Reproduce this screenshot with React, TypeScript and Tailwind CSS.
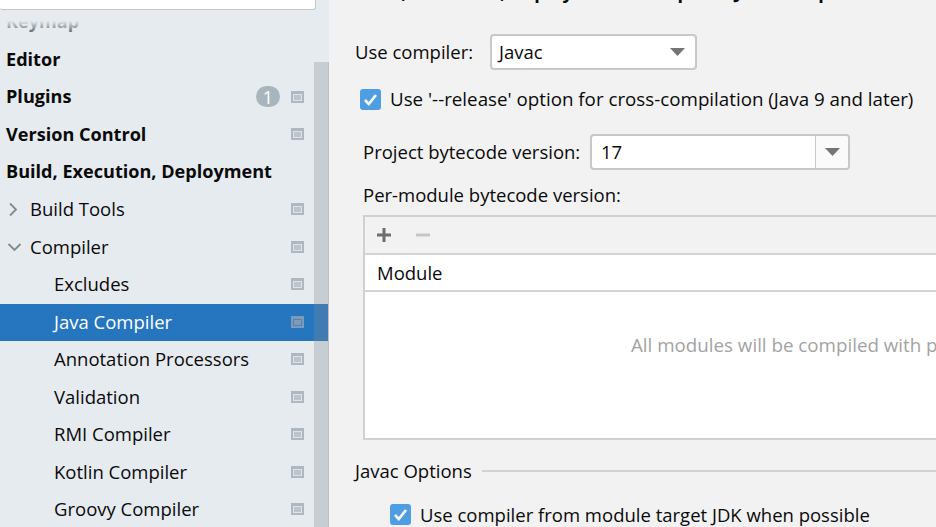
const font = "font-['Open_Sans','Noto_Sans',sans-serif]";

function ProjectIcon({ selected }: { selected?: boolean }) {
  return (
    <svg width="13" height="12" viewBox="0 0 13 12" className="shrink-0">
      <rect width="13" height="12" fill={selected ? "#7d9bb8" : "#aeb8c1"} />
      <rect x="2" y="3" width="9" height="7" fill={selected ? "#4f84b8" : "#dde3e8"} />
      <rect x="3" y="4" width="7" height="5" fill={selected ? "#7d9bb8" : "#bcc5cd"} />
    </svg>
  );
}

function TreeRow({
  label,
  bold,
  indent = 6,
  icon,
  badge,
  arrow,
  selected,
}: {
  label: string;
  bold?: boolean;
  indent?: number;
  icon?: boolean;
  badge?: string;
  arrow?: "right" | "down";
  selected?: boolean;
}) {
  return (
    <div
      className={`relative flex h-[37.5px] shrink-0 items-center pr-[25px] pb-[1px] ${
        selected ? "bg-[#2675bf] text-white" : "text-[#0a0a0a]"
      }`}
      style={{ paddingLeft: indent }}
    >
      {arrow === "right" && (
        <svg width="10" height="15" viewBox="0 0 10 15" fill="none" className="absolute left-2">
          <path d="M2 1.5l6 6-6 6" stroke="#85898d" strokeWidth="1.8" />
        </svg>
      )}
      {arrow === "down" && (
        <svg width="15" height="10" viewBox="0 0 15 10" fill="none" className="absolute left-[7px]">
          <path d="M1.5 2l6 6 6-6" stroke="#85898d" strokeWidth="1.8" />
        </svg>
      )}
      <span className={`flex-1 whitespace-nowrap ${bold ? "text-[18.1px] font-bold" : "text-[18.5px]"}`}>{label}</span>
      {badge && (
        <span className="mr-[11px] flex h-[21px] w-6 items-center justify-center rounded-full bg-[#a9b5bd] text-[18px] leading-none text-white">
          {badge}
        </span>
      )}
      {icon && <ProjectIcon selected={selected} />}
    </div>
  );
}

function Checkbox() {
  return (
    <span className="flex h-[21px] w-[21px] shrink-0 items-center justify-center rounded-[3px] bg-[#4f9ee3]">
      <svg width="15" height="13" viewBox="0 0 15 13" fill="none">
        <path d="M2 7l3.8 4L13 2" stroke="white" strokeWidth="2.6" />
      </svg>
    </span>
  );
}

function Arrow() {
  return (
    <svg width="15" height="8" viewBox="0 0 15 8">
      <path d="M0 0h15L7.5 8z" fill="#757575" />
    </svg>
  );
}

export default function App() {
  return (
    <div className={`flex h-[527px] w-[936px] overflow-hidden text-[18.5px] text-[#0a0a0a] ${font}`}>
      <aside className="relative flex w-[329px] shrink-0 flex-col overflow-hidden bg-[#e6ebf0]">
        <div className="relative z-10 mr-[13px] h-[10px] shrink-0 rounded-b-[3px] border-r border-b border-[#c4c7ca] bg-white" />
        <div className="relative -mt-[6.5px]">
          <TreeRow label="Keymap" bold />
          <div className="absolute inset-x-0 top-0 h-[37.5px] bg-gradient-to-b from-[#e6ebf0] from-45% to-transparent" />
        </div>
        <TreeRow label="Editor" bold />
        <TreeRow label="Plugins" bold icon badge="1" />
        <TreeRow label="Version Control" bold icon />
        <TreeRow label="Build, Execution, Deployment" bold />
        <TreeRow label="Build Tools" indent={30} arrow="right" icon />
        <TreeRow label="Compiler" indent={30} arrow="down" icon />
        <TreeRow label="Excludes" indent={54} icon />
        <TreeRow label="Java Compiler" indent={54} icon selected />
        <TreeRow label="Annotation Processors" indent={54} icon />
        <TreeRow label="Validation" indent={54} icon />
        <TreeRow label="RMI Compiler" indent={54} icon />
        <TreeRow label="Kotlin Compiler" indent={54} icon />
        <TreeRow label="Groovy Compiler" indent={54} icon />
        {/* scrollbar thumb lies over the rows */}
        <div className="absolute top-[62px] right-0 bottom-0 w-[15px] border-r border-[#bcc0c5] bg-[#7f8a96]/30" />
      </aside>

      <main className="min-w-0 flex-1 overflow-hidden bg-[#f2f2f2] pl-[26px]">
        <div className="-mt-[20px] h-[25px] overflow-hidden text-[18.1px] leading-[25px] font-bold whitespace-nowrap">
          Build, Execution, Deployment › Compiler › Java Compiler
        </div>

        <div className="mt-[29px] flex items-center">
          <span className="w-[135px] shrink-0 whitespace-nowrap">Use compiler:</span>
          <div className="flex h-9 w-[207px] items-center justify-between rounded-[4px] border-2 border-[#c8c8c8] bg-white pr-[10px] pl-[7px]">
            <span>Javac</span>
            <Arrow />
          </div>
        </div>

        <div className="mt-[15px] ml-[5px] flex items-center gap-[9px]">
          <Checkbox />
          <span className="text-[18.75px] whitespace-nowrap">Use '--release' option for cross-compilation (Java 9 and later)</span>
        </div>

        <div className="mt-[21px] ml-2 flex items-center">
          <span className="w-[227px] shrink-0 whitespace-nowrap">Project bytecode version:</span>
          <div className="flex h-9 w-[260px] overflow-hidden rounded-[4px] border-2 border-[#c8c8c8] bg-white">
            <span className="flex-1 pl-[9px] leading-[32px]">17</span>
            <span className="flex w-[33px] items-center justify-center border-l border-[#c8c8c8] bg-[#fafafa]">
              <Arrow />
            </span>
          </div>
        </div>

        <div className="mt-[12px] ml-2 h-[25px] leading-[25px] whitespace-nowrap">Per-module bytecode version:</div>

        <div className="mt-[8px] ml-2 h-[225px] w-[600px] border-2 border-[#d0d0d0] bg-white">
          <div className="flex h-[38px] items-center gap-[23px] border-b-2 border-[#d4d4d4] bg-[#f2f2f2] pl-[11px]">
            <svg width="16" height="16" viewBox="0 0 16 16">
              <path d="M8 1v14M1 8h14" stroke="#6e6e6e" strokeWidth="3" />
            </svg>
            <svg width="16" height="16" viewBox="0 0 16 16">
              <path d="M1 8h14" stroke="#c6c6c6" strokeWidth="3" />
            </svg>
          </div>
          <div className="flex h-[37px] items-center border-b-2 border-[#d4d4d4] pl-3">Module</div>
          <div className="pt-[39px] pl-[266px] text-[18.75px] whitespace-nowrap text-[#a3a3a3]">All modules will be compiled with project bytecode version</div>
        </div>

        <div className="mt-[17px] flex items-center gap-[10px]">
          <span className="whitespace-nowrap">Javac Options</span>
          <div className="h-[2px] flex-1 bg-[#d2d2d2]" />
        </div>

        <div className="mt-[16px] ml-[35px] flex items-center gap-[9px]">
          <Checkbox />
          <span className="whitespace-nowrap">Use compiler from module target JDK when possible</span>
        </div>
      </main>
    </div>
  );
}
